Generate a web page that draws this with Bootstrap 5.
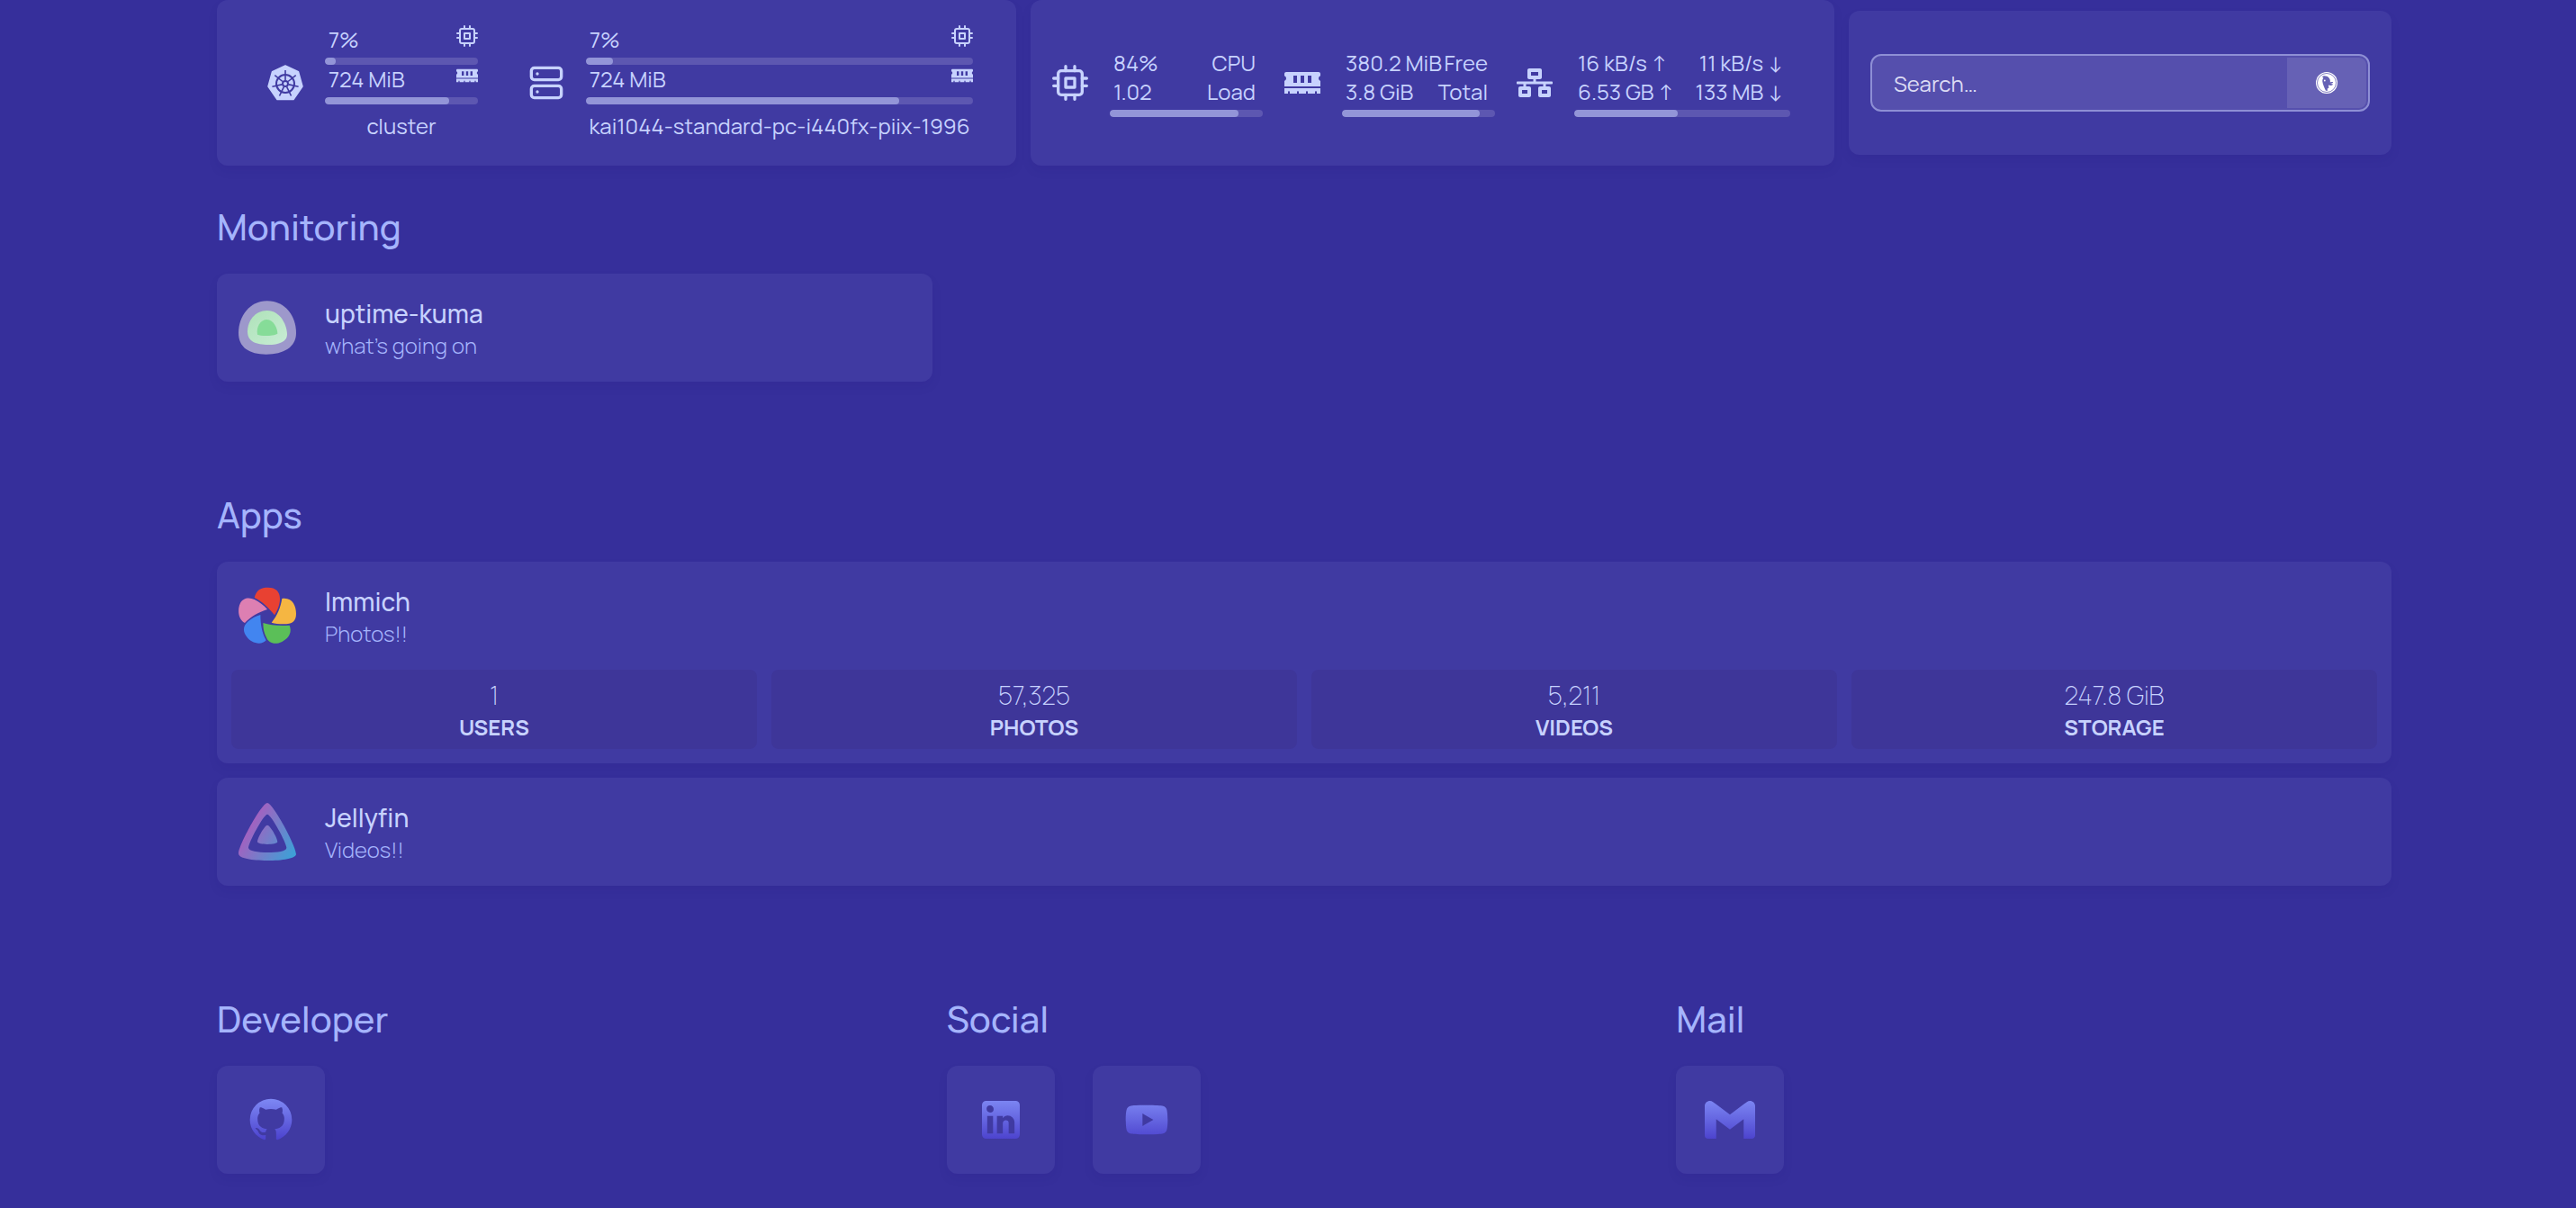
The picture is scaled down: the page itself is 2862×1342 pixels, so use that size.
<!DOCTYPE html>
<html lang="en">
<head>
<meta charset="utf-8">
<meta name="viewport" content="width=device-width, initial-scale=1">
<title>Homepage</title>
<link href="https://cdn.jsdelivr.net/npm/bootstrap@5.3.0/dist/css/bootstrap.min.css" rel="stylesheet">
<style>
:root{--page:#362f9b;--panel:#403aa2;--stat:#3e3699;--soft:#c7d2fe;--dim:#a5b4fc}
body{background:var(--page);color:var(--soft);font-family:Manrope,Inter,"Liberation Sans",sans-serif;font-size:24px;font-weight:400;line-height:32px}
.page{padding:0 205px 38px 241px}
.panel{background:var(--panel);border-radius:12px;box-shadow:0 6px 12px rgba(30,20,110,.07)}
.gap-16{gap:16px}.gap-24{gap:24px}
.widgets{display:grid;grid-template-columns:888fr 893fr 603fr;gap:16px}
.w-nodes{height:184px;padding:0 48px 0 56px;gap:56px}
.w-res{height:184px;padding:0 24px}
.w-search{padding:48px 24px}
.ico{width:40px;height:40px;flex:none}
.ico-s{width:24px;height:24px;flex:none}
.meter{width:170px}
.meter-net{width:240px}
.line{display:flex;justify-content:space-between;white-space:nowrap;padding:0 8px 0 4px}
.line-ico{padding-right:0}
.track{height:8px;border-radius:4px;background:#5d57b1;margin-top:4px;overflow:hidden}
.track>div{height:8px;border-radius:4px;background:#9395d8}
.caption{margin-top:8px;text-align:center;white-space:nowrap}
.searchbox{border:2px solid #8e8fd5;border-radius:12px;background:#554fad;height:64px;padding:2px}
.searchbox input{border:0;outline:0;background:none;color:#e0e7ff;padding:2px 22px 0;min-width:0}
.searchbox input::placeholder{color:#dcdcf4;opacity:1}
.searchbox button{width:88px;border:0;background:#6661b5;border-radius:0 8px 8px 0}
h2{font-size:40px;line-height:56px;font-weight:500;color:var(--dim);margin:0 0 24px}
section{margin-top:120px}
section.first{margin-top:40px}
.cols{display:grid;grid-template-columns:repeat(3,1fr);gap:16px}
.bookmarks{margin-right:-16px;gap:0}
.service{height:120px;padding:0 24px;gap:32px;color:var(--soft)}
.service svg{width:64px;height:64px;flex:none}
.svc-name{font-size:28px;line-height:40px;font-weight:500}
.svc-desc{color:var(--dim);font-weight:300}
.stats{padding:0 16px 16px}
.stat{background:var(--stat);border-radius:8px;height:88px}
.num{font-size:28px;line-height:40px;font-weight:200}
.lbl{font-weight:700}
.tiles{gap:42px}
.tile{width:120px;height:120px}
.tile svg{width:56px;height:56px}
</style>
<script src="https://cdn.jsdelivr.net/npm/bootstrap@5.3.0/dist/js/bootstrap.bundle.min.js"></script>
</head>
<body>
<svg width="0" height="0" class="position-absolute" aria-hidden="true">
<defs>
<linearGradient id="tone" gradientUnits="userSpaceOnUse" x1="0" y1="2" x2="0" y2="22"><stop offset="0" stop-color="#818cf8" stop-opacity=".95"/><stop offset="1" stop-color="#4a40cc"/></linearGradient>
<linearGradient id="jelly" gradientUnits="userSpaceOnUse" x1="132" y1="240" x2="285" y2="328"><stop offset="0" stop-color="#a65fbf"/><stop offset="1" stop-color="#3f9fd6"/></linearGradient>
<linearGradient id="kuma" x1="0" y1="0" x2="1" y2="1"><stop offset="0" stop-color="#aee2b8"/><stop offset="1" stop-color="#c8edd5"/></linearGradient>
</defs>
<symbol id="cpu" viewBox="0 0 24 24"><g fill="none" stroke="#c7d2fe" stroke-width="2" stroke-linecap="round" stroke-linejoin="round"><rect x="4" y="4" width="16" height="16" rx="2"/><rect x="9" y="9" width="6" height="6"/><path d="M9 1v3M15 1v3M9 20v3M15 20v3M20 9h3M20 14h3M1 9h3M1 14h3"/></g></symbol>
<symbol id="ram" viewBox="0 0 640 512"><path fill="#c7d2fe" d="M640 130.94V96c0-17.67-14.33-32-32-32H32C14.33 64 0 78.33 0 96v34.94c18.6 6.61 32 24.19 32 45.06s-13.4 38.45-32 45.06V320h640v-98.94c-18.6-6.61-32-24.19-32-45.06s13.4-38.45 32-45.06zM224 256h-64V128h64v128zm128 0h-64V128h64v128zm128 0h-64V128h64v128zM0 448h64v-26.67c0-8.84 7.16-16 16-16s16 7.16 16 16V448h128v-26.67c0-8.84 7.16-16 16-16s16 7.16 16 16V448h128v-26.67c0-8.84 7.16-16 16-16s16 7.16 16 16V448h128v-26.67c0-8.84 7.16-16 16-16s16 7.16 16 16V448h64v-96H0v96z"/></symbol>
</svg>

<main class="page">
<header class="widgets align-items-center">
  <div class="panel w-nodes d-flex align-items-center">
    <div class="d-flex align-items-center gap-24">
      <svg class="ico" viewBox="0 0 40 40"><path d="M20 1 34.5 7.700 39 24 29 38.500H11L1 24 5.500 7.700Z" fill="#c7d2fe" stroke="#c7d2fe" stroke-width="1.500" stroke-linejoin="round"/><g fill="none" stroke="#403aa1" stroke-width="2"><circle cx="20" cy="21" r="10"/><path stroke-width="1.600" d="M20 17V6M23.100 18.500 31.700 11.600M23.900 21.900 34.600 24.300M21.700 24.600 26.500 34.500M18.300 24.600 13.500 34.500M16.100 21.900 5.400 24.300M16.900 18.500 8.300 11.600"/><circle cx="20" cy="21" r="3"/></g></svg>
      <div class="meter">
        <div class="line line-ico"><span>7%</span><svg class="ico-s"><use href="#cpu"/></svg></div>
        <div class="track"><div style="width:7%"></div></div>
        <div class="line line-ico"><span>724 MiB</span><svg class="ico-s"><use href="#ram"/></svg></div>
        <div class="track"><div style="width:81%"></div></div>
        <div class="caption">cluster</div>
      </div>
    </div>
    <div class="d-flex align-items-center gap-24 flex-grow-1">
      <svg class="ico" viewBox="0 0 24 24" fill="none" stroke="#c7d2fe" stroke-width="2" stroke-linecap="round"><rect x="2" y="2" width="20" height="8" rx="2"/><rect x="2" y="14" width="20" height="8" rx="2"/><path d="M6 6h.01M6 18h.01"/></svg>
      <div class="flex-grow-1">
        <div class="line line-ico"><span>7%</span><svg class="ico-s"><use href="#cpu"/></svg></div>
        <div class="track"><div style="width:7%"></div></div>
        <div class="line line-ico"><span>724 MiB</span><svg class="ico-s"><use href="#ram"/></svg></div>
        <div class="track"><div style="width:81%"></div></div>
        <div class="caption">kai1044-standard-pc-i440fx-piix-1996</div>
      </div>
    </div>
  </div>

  <div class="panel w-res d-flex align-items-center gap-24">
    <svg class="ico"><use href="#cpu"/></svg>
    <div class="meter">
      <div class="line"><span>84%</span><span>CPU</span></div>
      <div class="line"><span>1.02</span><span>Load</span></div>
      <div class="track"><div style="width:84%"></div></div>
    </div>
    <svg class="ico"><use href="#ram"/></svg>
    <div class="meter">
      <div class="line"><span>380.2 MiB</span><span>Free</span></div>
      <div class="line"><span>3.8 GiB</span><span>Total</span></div>
      <div class="track"><div style="width:90%"></div></div>
    </div>
    <svg class="ico" viewBox="0 0 640 512"><path fill="#c7d2fe" fill-rule="evenodd" d="M640 264v-16c0-8.840-7.160-16-16-16H344v-40h72c17.670 0 32-14.330 32-32V32c0-17.670-14.330-32-32-32H224c-17.670 0-32 14.330-32 32v128c0 17.670 14.330 32 32 32h72v40H16c-8.840 0-16 7.160-16 16v16c0 8.840 7.160 16 16 16h104v40H64c-17.670 0-32 14.330-32 32v128c0 17.670 14.330 32 32 32h160c17.670 0 32-14.330 32-32V352c0-17.670-14.330-32-32-32h-56v-40h304v40h-56c-17.670 0-32 14.330-32 32v128c0 17.670 14.330 32 32 32h160c17.670 0 32-14.330 32-32V352c0-17.670-14.330-32-32-32h-56v-40h104c8.840 0 16-7.160 16-16zM256 128V64h128v64H256zm-64 320H96v-64h96v64zm352 0h-96v-64h96v64z"/></svg>
    <div class="meter-net">
      <div class="line"><span>16 kB/s ↑</span><span>11 kB/s ↓</span></div>
      <div class="line"><span>6.53 GB ↑</span><span>133 MB ↓</span></div>
      <div class="track"><div style="width:48%"></div></div>
    </div>
  </div>

  <form class="panel w-search" onsubmit="return false">
    <div class="searchbox d-flex">
      <input class="flex-grow-1" type="text" placeholder="Search…" aria-label="Search">
      <button type="submit" class="d-flex align-items-center justify-content-center" aria-label="DuckDuckGo"><svg class="ico-s" viewBox="0 0 24 24"><circle cx="12" cy="12" r="12" fill="#fff"/><circle cx="12" cy="12" r="10.500" fill="none" stroke="#6661b5" stroke-width=".8"/><path fill="#6661b5" d="M7 5c2-1.500 6-.5 7.500 1.500C16 8 16 10 15.800 11.500c1.500-.6 3.200-.6 3.400 0-.3 1-2.500 1.300-3.600 1.300 1.500.5 3.300.2 3.300.9-.4 1.300-3.500 1.500-4.500.8-1 .8 0 2 .2 2.700l-2 1.500 .5 2H11C9.500 18 7.500 13 7.300 10.500 7.200 8.700 7.600 7.500 8.400 6.800Z"/><circle cx="9.800" cy="9.500" r=".9" fill="#fff"/></svg></button>
    </div>
  </form>
</header>

<section class="first">
  <h2>Monitoring</h2>
  <div class="cols">
    <a href="#" class="panel service d-flex align-items-center text-decoration-none">
      <svg viewBox="105 336 192 192"><path fill="#9d98cb" d="M200 343C262 343 297 395 297 450 297 497 255 521 197 521 140 521 105 497 105 450 105 395 142 343 200 343Z"/><path fill="url(#kuma)" d="M200 375C245 375 267 425 267 455 267 478 240 489 203 489 165 489 135 480 135 445 135 410 160 375 200 375Z"/><path fill="#86dc98" d="M200 405C222 405 235 435 235 452 222 460 180 461 168 455 163 430 178 405 200 405Z"/></svg>
      <div><div class="svc-name">uptime-kuma</div><div class="svc-desc">what's going on</div></div>
    </a>
  </div>
</section>

<section>
  <h2>Apps</h2>
  <div class="d-flex flex-column gap-16">
    <div class="panel">
      <a href="#" class="service d-flex align-items-center text-decoration-none">
        <svg viewBox="105 336 192 192"><path fill="#e84132" d="M158 372C165 345 180 338 203 338 230 338 243 352 243 376 243 395 235 415 225 430 205 405 185 385 158 372Z"/><path fill="#f5b642" d="M250 375C285 370 297 400 297 425 297 450 285 460 255 460 240 460 225 458 215 455 235 430 245 405 250 375Z"/><path fill="#5bbf58" d="M187 456C210 464 245 467 275 464 285 490 270 508 250 519 225 531 205 522 198 505 190 490 187 475 187 456Z"/><path fill="#4285f0" d="M178 429C178 460 183 490 197 514 180 534 145 522 132 502 118 482 120 465 138 450 150 440 163 433 178 429Z"/><path fill="#dd7fb2" d="M201 411C172 420 145 435 126 456 102 443 102 410 110 392 120 372 140 370 158 378 175 387 190 398 201 411Z"/></svg>
        <div><div class="svc-name">Immich</div><div class="svc-desc">Photos!!</div></div>
      </a>
      <div class="stats d-flex gap-16 text-center">
        <div class="stat d-flex flex-column justify-content-center flex-fill w-25"><div class="num">1</div><div class="lbl">USERS</div></div>
        <div class="stat d-flex flex-column justify-content-center flex-fill w-25"><div class="num">57,325</div><div class="lbl">PHOTOS</div></div>
        <div class="stat d-flex flex-column justify-content-center flex-fill w-25"><div class="num">5,211</div><div class="lbl">VIDEOS</div></div>
        <div class="stat d-flex flex-column justify-content-center flex-fill w-25"><div class="num">247.8 GiB</div><div class="lbl">STORAGE</div></div>
      </div>
    </div>
    <a href="#" class="panel service d-flex align-items-center text-decoration-none">
      <svg viewBox="105 156 192 192"><path fill="url(#jelly)" fill-rule="evenodd" d="M201 156C220 156 297 300 297 326 297 341 250 348 201 348 150 348 105 341 105 325 105 298 182 156 201 156ZM201 194C188 194 138 290 138 305 138 316 170 321 201 321 235 321 265 317 265 305 265 290 214 194 201 194ZM201 230C193 230 168 272 168 286 168 291 185 294 201 294 218 294 235 291 235 286 235 272 210 230 201 230Z"/></svg>
      <div><div class="svc-name">Jellyfin</div><div class="svc-desc">Videos!!</div></div>
    </a>
  </div>
</section>

<section class="cols bookmarks">
  <div>
    <h2>Developer</h2>
    <div class="tiles d-flex">
      <a href="#" class="panel tile d-flex align-items-center justify-content-center" aria-label="GitHub"><svg viewBox="0 0 24 24"><path fill="url(#tone)" d="M12,2A10,10 0 0,0 2,12C2,16.420 4.870,20.170 8.840,21.500C9.340,21.580 9.500,21.270 9.500,21C9.500,20.770 9.500,20.140 9.500,19.310C6.730,19.910 6.140,17.970 6.140,17.970C5.680,16.810 5.030,16.500 5.030,16.500C4.120,15.880 5.100,15.900 5.100,15.900C6.100,15.970 6.630,16.930 6.630,16.930C7.500,18.450 8.970,18 9.540,17.760C9.630,17.110 9.890,16.670 10.170,16.420C7.950,16.170 5.620,15.310 5.620,11.500C5.620,10.390 6,9.500 6.650,8.790C6.550,8.540 6.200,7.500 6.750,6.150C6.750,6.150 7.590,5.880 9.500,7.170C10.290,6.950 11.150,6.840 12,6.840C12.850,6.840 13.710,6.950 14.500,7.170C16.410,5.880 17.250,6.150 17.250,6.150C17.800,7.500 17.450,8.540 17.350,8.790C18,9.500 18.380,10.390 18.380,11.500C18.380,15.320 16.040,16.160 13.810,16.410C14.170,16.720 14.500,17.330 14.500,18.260C14.500,19.600 14.500,20.680 14.500,21C14.500,21.270 14.660,21.590 15.170,21.500C19.140,20.160 22,16.420 22,12A10,10 0 0,0 12,2Z"/></svg></a>
    </div>
  </div>
  <div>
    <h2>Social</h2>
    <div class="tiles d-flex">
      <a href="#" class="panel tile d-flex align-items-center justify-content-center" aria-label="LinkedIn"><svg viewBox="0 0 24 24"><path fill="url(#tone)" d="M19 3A2 2 0 0 1 21 5V19A2 2 0 0 1 19 21H5A2 2 0 0 1 3 19V5A2 2 0 0 1 5 3H19M18.500 18.500V13.200A3.260 3.260 0 0 0 15.240 9.940C14.390 9.940 13.400 10.460 12.920 11.240V10.130H10.130V18.500H12.920V13.570C12.920 12.800 13.540 12.170 14.310 12.170A1.400 1.400 0 0 1 15.710 13.570V18.500H18.500M6.880 8.560A1.680 1.680 0 0 0 8.560 6.880C8.560 5.950 7.810 5.190 6.880 5.190A1.690 1.690 0 0 0 5.190 6.880C5.190 7.810 5.950 8.560 6.880 8.560M8.270 18.500V10.130H5.500V18.500H8.270Z"/></svg></a>
      <a href="#" class="panel tile d-flex align-items-center justify-content-center" aria-label="YouTube"><svg viewBox="0 0 24 24"><path fill="url(#tone)" d="M10,15L15.190,12L10,9V15M21.560,7.170C21.690,7.640 21.780,8.270 21.840,9.070C21.910,9.870 21.940,10.560 21.940,11.160L22,12C22,14.190 21.840,15.800 21.560,16.830C21.310,17.730 20.730,18.310 19.830,18.560C19.360,18.690 18.500,18.780 17.180,18.840C15.880,18.910 14.690,18.940 13.590,18.940L12,19C7.810,19 5.200,18.840 4.170,18.560C3.270,18.310 2.690,17.730 2.440,16.830C2.310,16.360 2.220,15.730 2.160,14.930C2.090,14.130 2.060,13.440 2.060,12.840L2,12C2,9.810 2.160,8.200 2.440,7.170C2.690,6.270 3.270,5.690 4.170,5.440C4.640,5.310 5.500,5.220 6.820,5.160C8.120,5.090 9.310,5.060 10.410,5.060L12,5C16.190,5 18.800,5.160 19.830,5.440C20.730,5.690 21.310,6.270 21.560,7.170Z"/></svg></a>
    </div>
  </div>
  <div>
    <h2>Mail</h2>
    <div class="tiles d-flex">
      <a href="#" class="panel tile d-flex align-items-center justify-content-center" aria-label="Gmail"><svg viewBox="0 0 24 24"><path fill="url(#tone)" d="M24 5.457v13.909c0 .904-.732 1.636-1.636 1.636h-3.819V11.730L12 16.640l-6.545-4.910v9.273H1.636A1.636 1.636 0 0 1 0 19.366V5.457c0-2.023 2.309-3.178 3.927-1.964L5.455 4.640 12 9.548l6.545-4.910 1.528-1.145C21.690 2.280 24 3.434 24 5.457z"/></svg></a>
    </div>
  </div>
</section>
</main>
</body>
</html>
